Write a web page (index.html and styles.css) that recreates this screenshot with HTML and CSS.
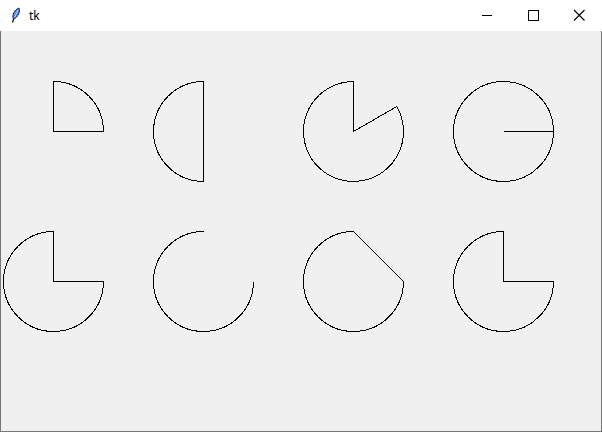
FILE: index.html
```html
<!DOCTYPE html>
<html>
<head>
<meta charset="utf-8">
<link rel="stylesheet" href="styles.css">
</head>
<body>
<div class="window">
  <div class="titlebar">
    <svg class="app-icon" width="16" height="16" viewBox="0 0 16 16">
      <path d="M4.5 15.5 L5.8 11.5" stroke="#111" stroke-width="1.3" fill="none"/>
      <path d="M5.5 12 C3.5 8.5 6.5 2.5 11 1 C12.5 4.5 10 10.5 5.5 12 Z" fill="#4f86e8" stroke="#16244d" stroke-width="1"/>
      <path d="M6.5 10.5 L10 3" stroke="#c4d8ff" stroke-width="0.9" fill="none"/>
    </svg>
    <span class="title">tk</span>
    <div class="controls">
      <svg class="ctl" width="46" height="30" viewBox="0 0 46 30">
        <path d="M18 15.5 H28" stroke="#000" stroke-width="1" shape-rendering="crispEdges"/>
      </svg>
      <svg class="ctl" width="46" height="30" viewBox="0 0 46 30">
        <rect x="18.5" y="10.5" width="10" height="10" fill="none" stroke="#000" stroke-width="1" shape-rendering="crispEdges"/>
      </svg>
      <svg class="ctl" width="46" height="30" viewBox="0 0 46 30">
        <path d="M18 10 L28.5 20.5 M28.5 10 L18 20.5" stroke="#000" stroke-width="1.1"/>
      </svg>
    </div>
  </div>
  <div class="client">
    <svg class="canvas" width="600" height="400" viewBox="1 31 600 400" shape-rendering="crispEdges">
      <g fill="none" stroke="#000" stroke-width="1">
        <path d="M53.5 131.5 L103.5 131.5 A50 50 0 0 0 53.5 81.5 Z"/>
        <path d="M203.5 81.5 A50 50 0 0 0 203.5 181.5 Z"/>
        <path d="M353.5 131.5 L353.5 81.5 A50 50 0 1 0 396.8 106.5 Z"/>
        <circle cx="503.5" cy="131.5" r="50"/>
        <path d="M503.5 131.5 H553.5"/>
        <path d="M53.5 281.5 L53.5 231.5 A50 50 0 1 0 103.5 281.5 Z"/>
        <path d="M203.5 231.5 A50 50 0 1 0 253.5 281.5"/>
        <path d="M353.5 231.5 A50 50 0 1 0 403.5 281.5 Z"/>
        <path d="M503.5 281.5 L503.5 231.5 A50 50 0 1 0 553.5 281.5 Z"/>
      </g>
    </svg>
  </div>
</div>
</body>
</html>
```
FILE: styles.css
```css
html, body {
  margin: 0;
  padding: 0;
  background: #f0f0f0;
}
.window {
  width: 602px;
  height: 432px;
  display: flex;
  flex-direction: column;
  font-family: "Noto Sans", "Liberation Sans", sans-serif;
}
.titlebar {
  height: 31px;
  background: #ffffff;
  display: flex;
  align-items: center;
  flex: none;
}
.app-icon {
  margin-left: 8px;
  margin-top: -1px;
}
.title {
  margin-left: 5px;
  font-size: 12px;
  color: #000;
  margin-top: -1px;
}
.controls {
  margin-left: auto;
  display: flex;
  align-self: flex-start;
}
.ctl {
  display: block;
}
.client {
  flex: 1;
  background: #f0f0f0;
  border: 1px solid #777777;
  border-top: none;
}
.canvas {
  display: block;
}
```
